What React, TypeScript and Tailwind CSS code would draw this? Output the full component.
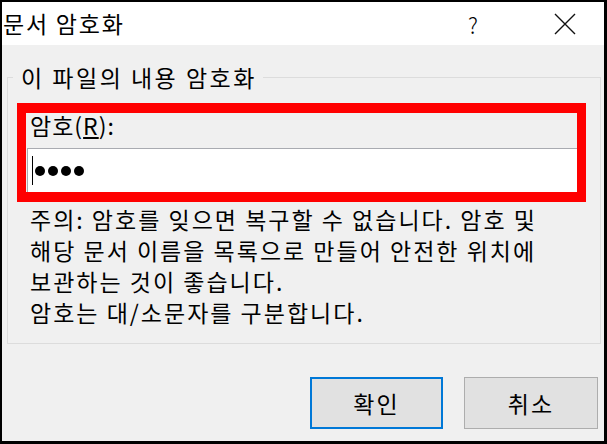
import React from "react";

const font = { fontFamily: '"Noto Sans CJK KR", "Noto Sans", sans-serif' };

export default function App() {
  return (
    <div
      className="flex h-[444px] w-[607px] flex-col border-t-2 border-r-[3px] border-b-[3px] border-l-2 border-black text-black"
      style={font}
    >
      {/* title bar */}
      <div className="flex h-[43px] items-center bg-white">
        <span className="pl-[1px] text-[23px] leading-none tracking-[1.8px]">문서 암호화</span>
        <span className="ml-auto mr-[76px] text-[22px] font-light leading-none">?</span>
        <svg className="mr-[28px]" width="22" height="22" viewBox="0 0 22 22" fill="none">
          <path d="M1 1 L21 21 M21 1 L1 21" stroke="#111" strokeWidth="1.4" />
        </svg>
      </div>

      {/* body */}
      <div className="flex flex-1 flex-col bg-[#f0f0f0] pr-[3px] pl-[5px]">
        <fieldset className="mt-[20px] border border-[#dcdcdc] pt-[14px] pr-[14px] pb-[15px]">
          <legend className="ml-[5px] pr-[6px] pl-[8px] text-[23px] leading-[24px] tracking-[2.5px]">
            이 파일의 내용 암호화
          </legend>

          <div className="pl-[9px]">
            <div className="flex flex-col border-x-[9px] border-y-[10px] border-[#ff0000] pl-[1px]">
              <label className="h-[35px] pt-[1px] pl-[3px] text-[23px] leading-none tracking-[1px]">
                암호(<span className="underline underline-offset-2">R</span>):
              </label>
              <div className="flex h-[44px] items-center border-t border-l border-[#a9abb1] bg-white pl-[4px]">
                <span className="mr-[2px] h-[29px] w-px bg-black" />
                <div className="flex gap-[3px]">
                  <span className="h-[10px] w-[10px] rounded-full bg-black" />
                  <span className="h-[10px] w-[10px] rounded-full bg-black" />
                  <span className="h-[10px] w-[10px] rounded-full bg-black" />
                  <span className="h-[10px] w-[10px] rounded-full bg-black" />
                </div>
              </div>
            </div>

            <p className="mt-[2px] ml-[13px] text-[23px] leading-[31px] tracking-[2px]">
              주의: 암호를 잊으면 복구할 수 없습니다. 암호 및
              <br />
              해당 문서 이름을 목록으로 만들어 안전한 위치에
              <br />
              보관하는 것이 좋습니다.
              <br />
              암호는 대/소문자를 구분합니다.
            </p>
          </div>
        </fieldset>

        <div className="mt-auto mb-[12px] flex justify-end gap-[21px] pr-[3px]">
          <button
            type="button"
            className="h-[52px] w-[133px] border-2 border-[#0078d7] bg-[#e1e1e1] text-[23px] tracking-[2px]"
          >
            확인
          </button>
          <button
            type="button"
            className="h-[52px] w-[134px] border border-[#adadad] bg-[#e1e1e1] text-[23px] tracking-[2px]"
          >
            취소
          </button>
        </div>
      </div>
    </div>
  );
}
